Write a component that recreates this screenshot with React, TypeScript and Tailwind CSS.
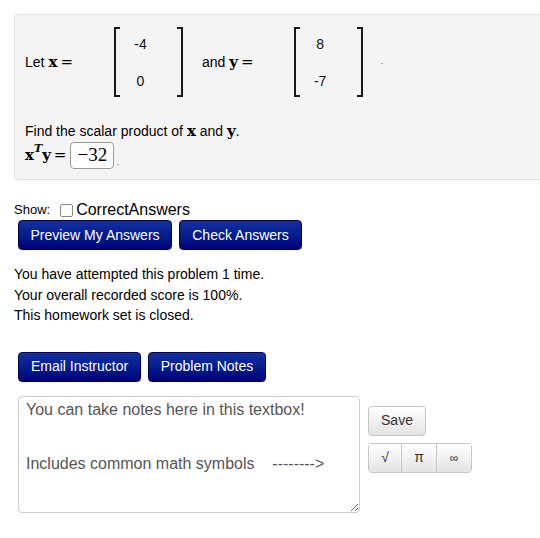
import React from "react";

const serif = { fontFamily: '"Liberation Serif", "DejaVu Serif", serif' };
const mserif = { fontFamily: '"DejaVu Serif", "Liberation Serif", serif' };

function Matrix({ top, bottom }: { top: string; bottom: string }) {
  return (
    <div className="flex h-[70px]">
      <div className="w-[6px] h-[70px] border-l-2 border-t-2 border-b-2 border-[#1a1a1a]" />
      <div className="w-[57px] pr-[16px] flex flex-col items-center pt-[9px] gap-[20px] text-[14px] leading-[17px] text-[#111]">
        <span>{top}</span>
        <span>{bottom}</span>
      </div>
      <div className="w-[6px] h-[70px] border-r-2 border-t-2 border-b-2 border-[#1a1a1a]" />
    </div>
  );
}

function BlueButton({ label, w }: { label: string; w: string }) {
  return (
    <button
      className={`${w} h-[30px] rounded-[4px] border border-[#00005a] bg-gradient-to-b from-[#14309f] to-[#00007a] text-white text-[14px] flex items-center justify-center`}
    >
      {label}
    </button>
  );
}

export default function App() {
  return (
    <div
      className="w-[540px] h-[538px] overflow-hidden bg-white text-black text-[14px]"
      style={{ fontFamily: '"Liberation Sans", Arial, sans-serif' }}
    >
      <div className="pt-[14px]">
        <div className="ml-[14px] w-[540px] bg-[#f4f4f4] border border-[#e2e2e2] rounded-l-[3px] pl-[10px] pt-[12px] pb-[10px]">
          <div className="flex items-center">
            <span>Let</span>
            <span className="ml-[4px] font-bold text-[15px]" style={mserif}>x</span>
            <span className="ml-[3px] text-[15px]" style={mserif}>=</span>
            <div className="ml-[41px]">
              <Matrix top="-4" bottom="0" />
            </div>
            <span className="ml-[19px]">and</span>
            <span className="ml-[4px] font-bold text-[15px]" style={mserif}>y</span>
            <span className="ml-[3px] text-[15px]" style={mserif}>=</span>
            <div className="ml-[40px]">
              <Matrix top="8" bottom="-7" />
            </div>
            <span className="ml-[18px] text-[9px] text-[#446]">.</span>
          </div>
          <div className="mt-[26px] leading-[17px]">
            Find the scalar product of{" "}
            <span className="font-bold text-[15px]" style={mserif}>x</span> and{" "}
            <span className="font-bold text-[15px]" style={mserif}>y</span>.
          </div>
          <div className="mt-[2px] flex items-center h-[27px]">
            <span className="font-bold text-[15px]" style={mserif}>x</span>
            <span className="italic font-bold text-[11px] -translate-y-[6px]" style={mserif}>T</span>
            <span className="font-bold text-[15px]" style={mserif}>y</span>
            <span className="ml-[3px] text-[15px]" style={mserif}>=</span>
            <div
              className="ml-[4px] w-[44px] h-[27px] rounded-[4px] border border-[#9a9a9a] bg-white flex items-center justify-center text-[19px]"
              style={serif}
            >
              −32
            </div>
            <span className="ml-[2px] self-end text-[9px] text-[#446]">.</span>
          </div>
        </div>

        <div className="ml-[14px] mt-[21px] flex items-center h-[18px]">
          <span className="text-[13px]">Show:</span>
          <span className="ml-[10px] w-[13px] h-[13px] border border-[#888] rounded-[2px] bg-white" />
          <span className="ml-[3px] text-[16px]">CorrectAnswers</span>
        </div>

        <div className="ml-[18px] mt-[1px] flex gap-[7px]">
          <BlueButton label="Preview My Answers" w="w-[154px]" />
          <BlueButton label="Check Answers" w="w-[123px]" />
        </div>

        <div className="ml-[14px] mt-[14px] leading-[20.5px]">
          <div>You have attempted this problem 1 time.</div>
          <div>Your overall recorded score is 100%.</div>
          <div>This homework set is closed.</div>
        </div>

        <div className="ml-[18px] mt-[26px] flex gap-[7px]">
          <BlueButton label="Email Instructor" w="w-[123px]" />
          <BlueButton label="Problem Notes" w="w-[118px]" />
        </div>

        <div className="ml-[18px] mt-[14px] flex gap-[8px]">
          <textarea
            className="w-[342px] h-[117px] rounded-[4px] border border-[#cccccc] bg-white px-[7px] pt-[4px] pb-[1px] text-[16px] leading-[18px] text-[#555] outline-none resize"
            style={{ fontFamily: '"Liberation Sans", Arial, sans-serif' }}
            defaultValue={"You can take notes here in this textbox!\n\n\nIncludes common math symbols    -------->"}
          />
          <div className="pt-[10px] flex flex-col gap-[7px] items-start">
            <button className="w-[58px] h-[30px] rounded-[4px] border border-[#c6c6c6] bg-gradient-to-b from-[#ffffff] to-[#e3e3e3] text-[#333] text-[14px]">
              Save
            </button>
            <div className="flex h-[30px] rounded-[4px] border border-[#c6c6c6] overflow-hidden text-[#333] text-[14px]">
              <button className="w-[33px] h-full bg-gradient-to-b from-[#ffffff] to-[#e3e3e3] border-r border-[#c6c6c6]">√</button>
              <button className="w-[35px] h-full bg-gradient-to-b from-[#ffffff] to-[#e3e3e3] border-r border-[#c6c6c6]">π</button>
              <button className="w-[34px] h-full bg-gradient-to-b from-[#ffffff] to-[#e3e3e3] text-[12px]">∞</button>
            </div>
          </div>
        </div>
      </div>
    </div>
  );
}
